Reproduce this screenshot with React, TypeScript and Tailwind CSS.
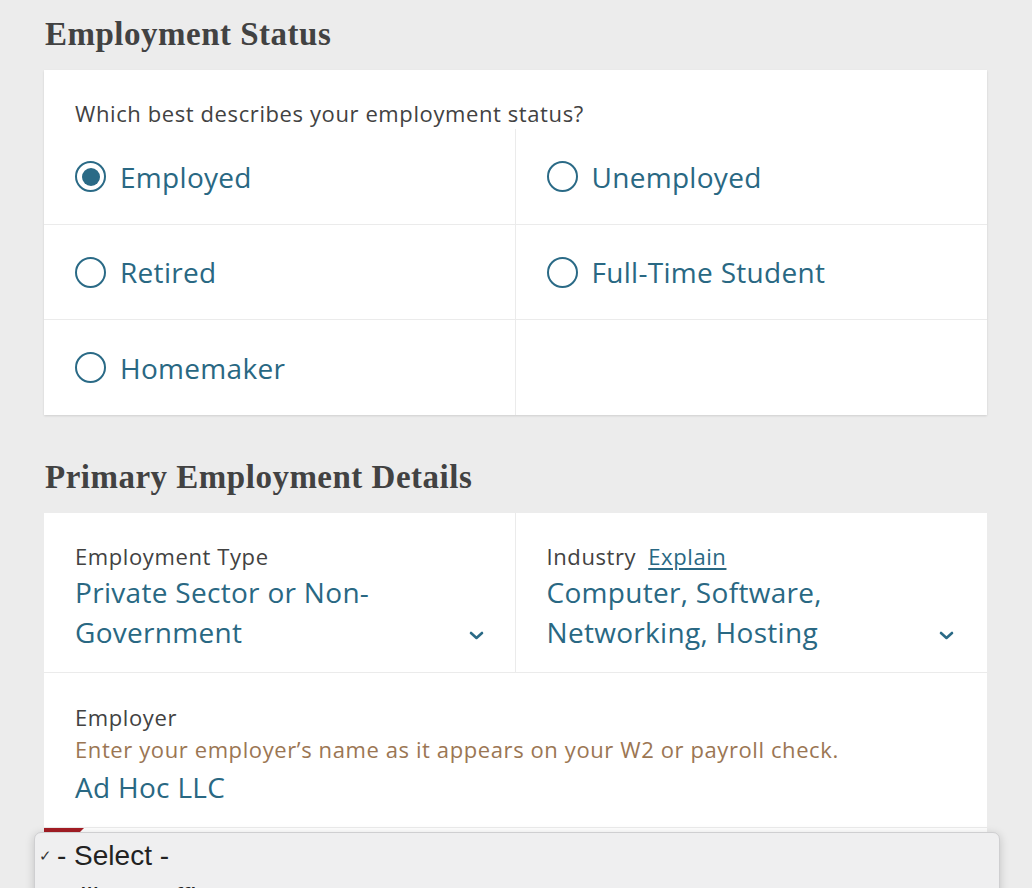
import { ReactNode } from "react"

const teal = "text-[#296883]"
const big = "text-[28px] tracking-[0.3px]"
const small = "text-[22px] tracking-[0.6px] leading-[28px]"

function Radio({ label, checked }: { label: string; checked?: boolean }) {
  return (
    <div className="flex items-center gap-[14px]">
      <span className="flex h-[31px] w-[31px] shrink-0 items-center justify-center rounded-full border-[2.5px] border-[#2a6a86]">
        {checked && <span className="h-[18px] w-[18px] rounded-full bg-[#2a6a86]" />}
      </span>
      <span className={`${big} leading-[40px] ${teal}`}>{label}</span>
    </div>
  )
}

function Chevron() {
  return (
    <svg width="15" height="9" viewBox="0 0 15 9" className="mb-[12px] shrink-0">
      <path d="M2 2l5.5 5 5.5-5" fill="none" stroke="#2a6a86" strokeWidth="2.6" strokeLinecap="round" strokeLinejoin="round" />
    </svg>
  )
}

function Heading({ children, className }: { children: ReactNode; className?: string }) {
  return (
    <h2
      className={`font-['Liberation_Serif',serif] text-[33px] font-bold leading-[40px] tracking-[0.5px] text-[#424242] ${className ?? ""}`}
    >
      {children}
    </h2>
  )
}

export default function App() {
  const options: { label: string; checked?: boolean }[] = [
    { label: "Employed", checked: true },
    { label: "Unemployed" },
    { label: "Retired" },
    { label: "Full-Time Student" },
    { label: "Homemaker" },
    { label: "" },
  ]

  return (
    <div className="relative h-[888px] w-[1032px] overflow-hidden bg-[#ececec] pl-[44px] font-['Open_Sans',sans-serif]">
      <div className="w-[943px]">
        <Heading className="mb-[16px] pt-[14px] pl-[1px]">Employment Status</Heading>

        <div className="bg-white shadow-[0_1px_2px_rgba(0,0,0,0.12)]">
          <p className={`px-[31px] pt-[29px] ${small} text-[#424242]`}>
            Which best describes your employment status?
          </p>
          <div className="mt-[2px] grid grid-cols-2">
            {options.map((o, i) => (
              <div
                key={i}
                className={`flex items-center px-[31px] ${i < 2 ? "h-[96px]" : "h-[95px]"} ${
                  i % 2 === 0 ? "border-r border-[#ebebeb]" : ""
                } ${i < 4 ? "border-b border-[#ebebeb]" : ""}`}
              >
                {o.label && <Radio label={o.label} checked={o.checked} />}
              </div>
            ))}
          </div>
        </div>

        <Heading className="mb-[16px] mt-[42px] pl-[1px]">Primary Employment Details</Heading>

        <div className="bg-white">
          <div className="grid grid-cols-2 border-b border-[#ebebeb]">
            <div className="border-r border-[#ebebeb] pb-[20px] pl-[31px] pr-[31px] pt-[29px]">
              <div className={`${small} text-[#424242]`}>Employment Type</div>
              <div className="mt-[2px] flex items-end justify-between">
                <div className={`${big} leading-[40px] ${teal}`}>
                  Private Sector or Non-
                  <br />
                  Government
                </div>
                <Chevron />
              </div>
            </div>
            <div className="pb-[20px] pl-[31px] pr-[33px] pt-[29px]">
              <div className={`${small} text-[#424242]`}>
                Industry
                <span className={`ml-[12px] underline underline-offset-[3px] ${teal}`}>Explain</span>
              </div>
              <div className="mt-[2px] flex items-end justify-between">
                <div className={`${big} leading-[40px] ${teal}`}>
                  Computer, Software,
                  <br />
                  Networking, Hosting
                </div>
                <Chevron />
              </div>
            </div>
          </div>

          <div className="border-b border-[#ebebeb] pb-[20px] pl-[31px] pt-[30px]">
            <div className={`${small} text-[#424242]`}>Employer</div>
            <div className={`mt-[4px] ${small} text-[#9b7653]`}>
              Enter your employer’s name as it appears on your W2 or payroll check.
            </div>
            <div className={`mt-[4px] ${big} leading-[40px] ${teal}`}>Ad Hoc LLC</div>
          </div>

          <div className="h-[6px] w-[40px] bg-[#a51d24] [clip-path:polygon(0_0,100%_0,85%_100%,0_100%)]" />
        </div>
      </div>

      {/* native select popup */}
      <div className="absolute left-[34px] top-[832px] h-[80px] w-[966px] rounded-t-[7px] border border-[#cfcfd1] bg-[#efeff0] font-['Liberation_Sans',sans-serif] shadow-[0_2px_10px_rgba(0,0,0,0.18)]">
        <div className="flex items-center pt-[6px]">
          <span className="w-[22px] pl-[4px] text-[15px] leading-[34px] text-[#333]">✓</span>
          <span className="text-[28px] leading-[34px] text-[#222]">- Select -</span>
        </div>
        <div className="pl-[22px] pt-[8px] text-[28px] leading-[34px] text-[#222]">Military Officer</div>
      </div>
    </div>
  )
}
